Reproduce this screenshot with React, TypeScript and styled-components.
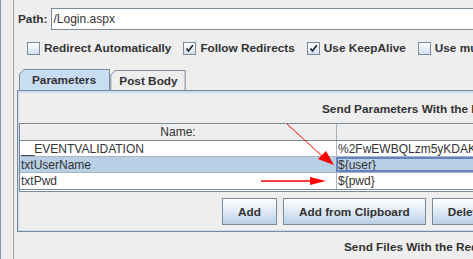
import React from "react";
import styled, { createGlobalStyle } from "styled-components";

const Global = createGlobalStyle`
  html, body { margin: 0; padding: 0; background: #eeeeee; overflow: hidden; }
  body { font-family: "Liberation Sans", Arial, sans-serif; font-size: 12px; color: #333333; }
`;

const Frame = styled.div`
  position: relative;
  width: 473px;
  height: 259px;
  overflow: hidden;
  display: flex;
  background: #eeeeee;
`;

const LeftStrip = styled.div`
  flex: none;
  width: 13px;
  box-sizing: border-box;
  border-left: 1px solid #8594a5;
`;

const Main = styled.div`
  flex: none;
  width: 760px;
  border-left: 1px solid #a3a3a3;
  display: flex;
  flex-direction: column;
`;

const PathRow = styled.div`
  display: flex;
  align-items: center;
  margin-top: 8px;
  padding-left: 4px;
  gap: 3px;
`;

const Label = styled.span`
  font-weight: bold;
  font-size: 11.8px;
  color: #333333;
`;

const TextInput = styled.div`
  width: 700px;
  height: 22px;
  box-sizing: border-box;
  border: 1px solid #7a8a99;
  background: #ffffff;
  display: flex;
  align-items: center;
  padding-left: 2px;
  color: #333333;
`;

const CheckRow = styled.div`
  display: flex;
  align-items: center;
  margin-top: 9px;
  padding-left: 13px;
  height: 18px;
  gap: 12px;
`;

const CheckItem = styled.label`
  display: flex;
  align-items: center;
  gap: 4px;
  font-weight: bold;
  font-size: 11.8px;
  white-space: nowrap;
`;

const Box = styled.span`
  width: 13px;
  height: 13px;
  box-sizing: border-box;
  border: 1px solid #7a8a99;
  background: linear-gradient(#ffffff, #cfdff0);
  display: flex;
  align-items: center;
  justify-content: center;
`;

const Tabs = styled.div`
  display: flex;
  align-items: flex-end;
  margin-top: 12px;
  margin-left: 5px;
  height: 21px;
`;

const TabOuter = styled.div<{ $active?: boolean }>`
  background: #7a8a99;
  clip-path: polygon(0 5px, 5px 0, 100% 0, 100% 100%, 0 100%);
  padding: 1px 1px 0 1px;
  height: ${(p) => (p.$active ? "21px" : "20px")};
  box-sizing: border-box;
`;

const TabInner = styled.div<{ $active?: boolean }>`
  height: 100%;
  box-sizing: border-box;
  clip-path: polygon(0 4px, 4px 0, 100% 0, 100% 100%, 0 100%);
  background: ${(p) => (p.$active ? "#c8ddf2" : "#eeeeee")};
  display: flex;
  align-items: center;
  font-weight: bold;
  font-size: 11.8px;
  padding: ${(p) => (p.$active ? "0 13px 0 12px" : "0 7px 0 8px")};
`;

const Panel = styled.div`
  margin-left: 3px;
  height: 142px;
  box-sizing: border-box;
  border: 1px solid #7a8a99;
  border-right: none;
  display: flex;
  flex-direction: column;
`;

const PanelInner = styled.div`
  flex: 1;
  border-top: 2px solid #c8ddf2;
  border-left: 1px solid #c8ddf2;
  border-bottom: 1px solid #c8ddf2;
  display: flex;
  flex-direction: column;
`;

const Caption = styled.div<{ $left: number }>`
  font-weight: bold;
  font-size: 11.8px;
  padding-left: ${(p) => p.$left}px;
  height: 29px;
  display: flex;
  align-items: center;
  padding-top: 1px;
  white-space: nowrap;
`;

const Table = styled.div`
  border: 1px solid #7a8a99;
  border-right: none;
  border-bottom: 3px double #7a8a99;
  display: flex;
  flex-direction: column;
  background: #ffffff;
`;

const Row = styled.div<{ $header?: boolean; $selected?: boolean }>`
  display: grid;
  grid-template-columns: 316px 1fr;
  height: ${(p) => (p.$header ? "17px" : "16px")};
  box-sizing: border-box;
  border-bottom: 1px solid ${(p) => (p.$header ? "#7a8a99" : "#a8b4c0")};
  background: ${(p) => (p.$header ? "#eeeeee" : p.$selected ? "#b8cfe5" : "#ffffff")};
  &:last-child { border-bottom: none; }
`;

const Cell = styled.div<{ $header?: boolean; $focus?: boolean }>`
  display: flex;
  align-items: center;
  justify-content: ${(p) => (p.$header ? "center" : "flex-start")};
  padding-left: ${(p) => (p.$header ? "0" : "1px")};
  white-space: nowrap;
  overflow: hidden;
  color: #333333;
  box-sizing: border-box;
  & + & { border-left: 1px solid #a8b4c0; }
  ${(p) => (p.$focus ? "outline: 2px solid #6382bf; outline-offset: -2px;" : "")}
`;

const Buttons = styled.div`
  display: flex;
  gap: 6px;
  padding-left: 203px;
  margin-top: 6px;
`;

const Button = styled.div`
  height: 27px;
  box-sizing: border-box;
  border: 1px solid #7a8a99;
  background: linear-gradient(#ffffff 0%, #e3ecf6 45%, #b8cfe5 100%);
  display: flex;
  align-items: center;
  font-weight: bold;
  font-size: 11.8px;
  padding: 0 15px;
  white-space: nowrap;
`;

const Footer = styled.div`
  font-weight: bold;
  font-size: 11.8px;
  padding-left: 330px;
  margin-top: 8px;
  white-space: nowrap;
`;

const Arrows = styled.svg`
  position: absolute;
  left: 0;
  top: 0;
  pointer-events: none;
`;

const Check = () => (
  <svg width="9" height="9" viewBox="0 0 9 9">
    <path d="M1.5 4.5 L3.5 7 L7.8 1.2" fill="none" stroke="#222" strokeWidth="1.6" />
  </svg>
);

const CheckBox = ({ label, checked }: { label: string; checked?: boolean }) => (
  <CheckItem>
    <Box>{checked && <Check />}</Box>
    {label}
  </CheckItem>
);

export default function App() {
  return (
    <>
      <Global />
      <Frame>
        <LeftStrip />
        <Main>
          <PathRow>
            <Label>Path:</Label>
            <TextInput>/Login.aspx</TextInput>
          </PathRow>
          <CheckRow>
            <CheckBox label="Redirect Automatically" />
            <CheckBox label="Follow Redirects" checked />
            <CheckBox label="Use KeepAlive" checked />
            <CheckBox label="Use multipart/form-data for POST" />
          </CheckRow>
          <Tabs>
            <TabOuter $active>
              <TabInner $active>Parameters</TabInner>
            </TabOuter>
            <TabOuter>
              <TabInner>Post Body</TabInner>
            </TabOuter>
          </Tabs>
          <Panel>
            <PanelInner>
              <Caption $left={303}>Send Parameters With the Request:</Caption>
              <Table>
                <Row $header>
                  <Cell $header>Name:</Cell>
                  <Cell $header>Value</Cell>
                </Row>
                <Row>
                  <Cell>__EVENTVALIDATION</Cell>
                  <Cell>%2FwEWBQLzm5yKDAKvruq2CALSxeCRDwK1qbSRCwKC3IeGDCnQ</Cell>
                </Row>
                <Row $selected>
                  <Cell>txtUserName</Cell>
                  <Cell $focus>{"${user}"}</Cell>
                </Row>
                <Row>
                  <Cell>txtPwd</Cell>
                  <Cell>{"${pwd}"}</Cell>
                </Row>
              </Table>
              <Buttons>
                <Button>Add</Button>
                <Button>Add from Clipboard</Button>
                <Button>Delete</Button>
                <Button>Up</Button>
                <Button>Down</Button>
              </Buttons>
            </PanelInner>
          </Panel>
          <Footer>Send Files With the Request:</Footer>
        </Main>
        <Arrows width="473" height="259" viewBox="0 0 473 259">
          <line x1="287" y1="124" x2="322" y2="156" stroke="#ff0000" strokeWidth="1" />
          <polygon points="334,165 318,159 326,151" fill="#ff0000" />
          <line x1="261" y1="181" x2="312" y2="181" stroke="#ff0000" strokeWidth="1.5" />
          <polygon points="326,181 310,177 310,185" fill="#ff0000" />
        </Arrows>
      </Frame>
    </>
  );
}
